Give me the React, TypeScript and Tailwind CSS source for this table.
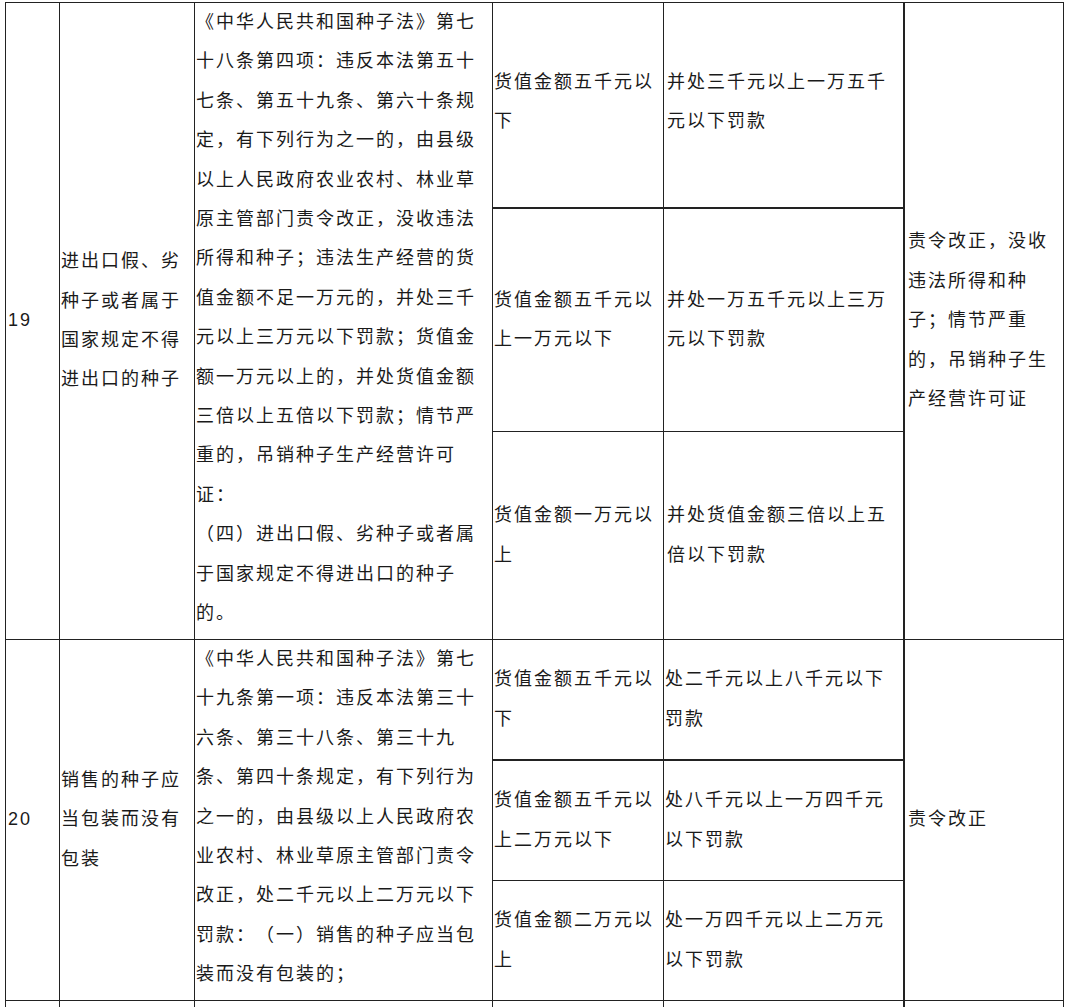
import React from "react";

const B = "border-[#222]";
const cell = `border-r border-b ${B} text-[#1a1a1a]`;
const txt = "text-[18px] leading-[39.4px] tracking-[2px] [text-spacing-trim:space-all] [line-break:strict]";

function Mid({ children, extra = "" }: { children?: React.ReactNode; extra?: string }) {
  return (
    <div className={`${cell} flex items-center ${extra}`}>
      <div className={`${txt} w-full`}>{children}</div>
    </div>
  );
}

function Top({ children, extra = "" }: { children?: React.ReactNode; extra?: string }) {
  return (
    <div className={`${cell} ${extra}`}>
      <div className={`${txt} w-full`}>{children}</div>
    </div>
  );
}

export default function App() {
  return (
    <div className="h-[1007px] w-[1069px] overflow-hidden bg-white pl-[5px] pt-[2px] font-['Liberation_Sans','Noto_Sans_CJK_SC',sans-serif]">
      <div
        className={`grid w-max border-t border-l ${B} grid-cols-[54px_135px_298px_171px_241px_159px] grid-rows-[206px_223px_208px_121px_120px_120px_60px]`}
      >
        {/* Row 19 */}
        <Mid extra="row-span-3 pl-[2px]">19</Mid>
        <Mid extra="row-span-3 pl-[1px]">进出口假、劣种子或者属于国家规定不得进出口的种子</Mid>
        <Top extra="row-span-3 pl-[1px]">
          <p>
            《中华人民共和国种子法》第七十八条第四项：违反本法第五十七条、第五十九条、第六十条规定，有下列行为之一的，由县级以上人民政府农业农村、林业草原主管部门责令改正，没收违法所得和种子；违法生产经营的货值金额不足一万元的，并处三千元以上三万元以下罚款；货值金额一万元以上的，并处货值金额三倍以上五倍以下罚款；情节严重的，吊销种子生产经营许可证：
          </p>
          <p>（四）进出口假、劣种子或者属于国家规定不得进出口的种子的。</p>
        </Top>
        <Mid extra="border-b-2 pl-[1px] pb-[6px]">货值金额五千元以下</Mid>
        <Mid extra="border-b-2 border-r-2 pl-[3px] pb-[6px]">并处三千元以上一万五千元以下罚款</Mid>
        <Mid extra="row-span-3 pl-[3px]">责令改正，没收违法所得和种子；情节严重的，吊销种子生产经营许可证</Mid>

        <Mid extra="pl-[1px]">货值金额五千元以上一万元以下</Mid>
        <Mid extra="border-r-2 pl-[3px]">并处一万五千元以上三万元以下罚款</Mid>

        <Mid extra="pl-[1px]">货值金额一万元以上</Mid>
        <Mid extra="border-r-2 pl-[3px]">并处货值金额三倍以上五倍以下罚款</Mid>

        {/* Row 20 */}
        <Mid extra="row-span-3 pl-[2px]">20</Mid>
        <Mid extra="row-span-3 pl-[1px]">销售的种子应当包装而没有包装</Mid>
        <Top extra="row-span-3 pl-[1px]">
          <p>
            《中华人民共和国种子法》第七十九条第一项：违反本法第三十六条、第三十八条、第三十九条、第四十条规定，有下列行为之一的，由县级以上人民政府农业农村、林业草原主管部门责令改正，处二千元以上二万元以下罚款：（一）销售的种子应当包装而没有包装的；
          </p>
        </Top>
        <Mid extra="border-b-2 pl-[1px]">货值金额五千元以下</Mid>
        <Mid extra="border-b-2 border-r-2 pl-[1px]">处二千元以上八千元以下罚款</Mid>
        <Mid extra="row-span-3 pl-[3px]">责令改正</Mid>

        <Mid extra="pl-[1px]">货值金额五千元以上二万元以下</Mid>
        <Mid extra="border-r-2 pl-[1px]">处八千元以上一万四千元以下罚款</Mid>

        <Mid extra="pl-[1px]">货值金额二万元以上</Mid>
        <Mid extra="border-r-2 pl-[1px]">处一万四千元以上二万元以下罚款</Mid>

        {/* Row 21 (partial) */}
        <div className={cell} />
        <div className={cell} />
        <div className={cell} />
        <div className={cell} />
        <div className={`${cell} border-r-2`} />
        <div className={cell} />
      </div>
    </div>
  );
}
